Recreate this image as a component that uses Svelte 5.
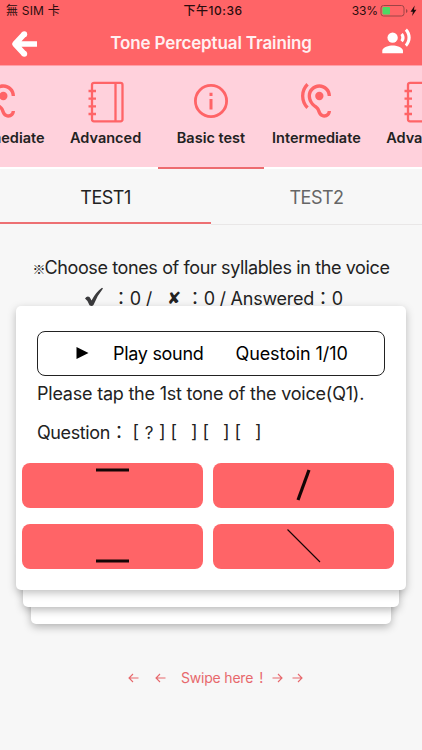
<script lang="ts">
	type Category = { label: string; icon: 'ear' | 'book' | 'info' };

	const categories: Category[] = [
		{ label: 'Intermediate', icon: 'ear' },
		{ label: 'Advanced', icon: 'book' },
		{ label: 'Basic test', icon: 'info' },
		{ label: 'Intermediate', icon: 'ear' },
		{ label: 'Advanced', icon: 'book' }
	];
	const tests = ['TEST1', 'TEST2'];

	// one stroke per tone, drawn in a 181x45 button
	const tones = [
		{ name: 'high', x1: 74, y1: 7, x2: 107, y2: 7, width: 3 },
		{ name: 'rising', x1: 85, y1: 37, x2: 96, y2: 7, width: 3.2 },
		{ name: 'low', x1: 74, y1: 37, x2: 107, y2: 37, width: 3 },
		{ name: 'falling', x1: 74.5, y1: 5.5, x2: 107, y2: 38, width: 1.1 }
	];

	let category = $state(2);
	let test = $state(0);
</script>

<div class="app">
	<header>
		<div class="status">
			<span class="carrier">無 SIM 卡</span>
			<span class="time">下午10:36</span>
			<span class="power">
				<span class="percent">33%</span>
				<svg width="38" height="14" viewBox="0 0 38 14">
					<rect x="1" y="1.5" width="23" height="10.5" rx="2.5" fill="none" stroke="#9c4446" />
					<rect x="2.5" y="3" width="7.5" height="7.5" rx="1" fill="#4cd964" />
					<path d="M26 5v4q1.500-.7 1.500-2t-1.500-2z" fill="#9c4446" />
					<path d="M34.700 1.500 30.500 7.800h2.400l-.8 4.200 4.300-6.300h-2.500z" fill="#200c0d" />
				</svg>
			</span>
		</div>
		<div class="bar">
			<button class="back" aria-label="Back">
				<svg width="28" height="30" viewBox="0 0 28 30">
					<path d="M14.300 5 5 15l9.300 10M6 15h21" fill="none" stroke="#fff" stroke-width="5.700" stroke-linejoin="round" />
					<circle cx="14.300" cy="5.200" r="2.900" fill="#fff" />
					<circle cx="14.300" cy="24.800" r="2.900" fill="#fff" />
				</svg>
			</button>
			<h1>Tone Perceptual Training</h1>
			<button class="voice" aria-label="Voice">
				<svg width="31" height="31" viewBox="0 0 24 24" fill="#fff">
					<circle cx="9" cy="9" r="4" />
					<path d="M9 15c-2.670 0-8 1.340-8 4v2h16v-2c0-2.660-5.330-4-8-4zM16.760 5.360l-1.680 1.690c.84 1.180.84 2.710 0 3.890l1.680 1.690c2.020-2.020 2.020-5.070 0-7.270zM20.070 2l-1.630 1.630c2.770 3.020 2.770 7.560 0 10.740L20.070 16c3.900-3.890 3.910-9.950 0-14z" />
				</svg>
			</button>
		</div>
	</header>

	<nav class="categories">
		{#each categories as item, i}
			<button class="category" class:active={i === category} onclick={() => (category = i)}>
				<svg width="40" height="42" viewBox="0 0 40 42">
					{#if item.icon === 'ear'}
						<g transform="scale(1.6667)" fill="#ff6467">
							<path d="M17 20c-.29 0-.56-.06-.76-.15-.71-.37-1.210-.88-1.710-2.380-.51-1.560-1.470-2.290-2.390-3-.79-.61-1.610-1.240-2.320-2.530C9.290 10.980 9 9.930 9 9c0-2.800 2.200-5 5-5s5 2.200 5 5h2c0-3.930-3.070-7-7-7S7 5.070 7 9c0 1.260.38 2.650 1.070 3.900.91 1.650 1.980 2.480 2.850 3.150.81.62 1.390 1.070 1.710 2.050.6 1.820 1.370 2.840 2.730 3.550.51.23 1.070.35 1.640.35 2.210 0 4-1.790 4-4h-2c0 1.100-.9 2-2 2zM7.640 2.640L6.220 1.220C4.230 3.210 3 5.960 3 9s1.230 5.790 3.220 7.780l1.410-1.410C6.010 13.740 5 11.490 5 9s1.010-4.740 2.640-6.360z" />
							<circle cx="14" cy="9" r="2.500" />
						</g>
					{:else if item.icon === 'book'}
						<g fill="none" stroke="#ff6467" stroke-width="2.300">
							<rect x="6" y="1.800" width="30.500" height="38.500" rx="2" />
							<path d="M29.500 2v38M2.500 10h7.500M2.500 17.700h7.500M2.500 25.400h7.500M2.500 33h7.500" />
						</g>
					{:else}
						<circle cx="20" cy="20" r="15.600" fill="none" stroke="#ff6467" stroke-width="2.800" />
						<path d="M20 18v10.500M20 11.800v3.200" stroke="#ff6467" stroke-width="3" />
					{/if}
				</svg>
				<span>{item.label}</span>
			</button>
		{/each}
	</nav>

	<nav class="tests">
		{#each tests as name, i}
			<button class="test" class:active={i === test} onclick={() => (test = i)}>{name}</button>
		{/each}
	</nav>

	<main>
		<p class="hint"><span class="mark">※</span>Choose tones of four syllables in the voice</p>
		<p class="score">
			<svg width="20" height="20" viewBox="0 0 20 20">
				<path d="M1 11.500q2-3 4.500-1.500 1.200 1.500 2 3.500Q12 5 18 .8l1 .6Q13 8.500 9.500 18q-1.500 1.600-4 .3Q4.500 14 1 11.500z" fill="#3b3b3d" />
			</svg>
			<span class="ok">：0 /</span>
			<span class="cross">✘</span>
			<span class="ng">：0 / Answered：0</span>
		</p>

		<div class="stack">
			<section class="card">
				<button class="play">
					<svg width="13" height="14" viewBox="0 0 13 14"><path d="M.5 1v12L12.500 7z" /></svg>
					<span class="play-label">Play sound</span>
					<span class="count">Questoin 1/10</span>
				</button>
				<p class="order">Please tap the 1st tone of the voice(Q1).</p>
				<p class="question">
					<span class="label">Question：</span><span class="slot">[<i>?</i>]</span><span class="slot">[<i></i>]</span><span class="slot">[<i></i>]</span><span class="slot">[<i></i>]</span>
				</p>
				<div class="tones">
					{#each tones as tone}
						<button class="tone" aria-label={tone.name}>
							<svg width="181" height="45" viewBox="0 0 181 45">
								<line x1={tone.x1} y1={tone.y1} x2={tone.x2} y2={tone.y2} stroke="#140505" stroke-width={tone.width} />
							</svg>
						</button>
					{/each}
				</div>
			</section>
			<div class="under first"></div>
			<div class="under second"></div>
		</div>

		<p class="swipe">
			<svg width="11" height="10" viewBox="0 0 11 10"><path d="M5 1 1 5l4 4M1 5h9.500" /></svg>
			<svg width="11" height="10" viewBox="0 0 11 10"><path d="M5 1 1 5l4 4M1 5h9.500" /></svg>
			<span>Swipe here<b>!</b></span>
			<svg width="11" height="10" viewBox="0 0 11 10"><path d="M6 1l4 4-4 4M10 5H.5" /></svg>
			<svg width="11" height="10" viewBox="0 0 11 10"><path d="M6 1l4 4-4 4M10 5H.5" /></svg>
		</p>
	</main>
</div>

<style>
	:global(body) { margin: 0; background: #f7f7f7; }

	.app {
		width: 422px; height: 750px; overflow: hidden;
		display: flex; flex-direction: column;
		background: #f7f7f7; color: #222;
		font-family: Inter, 'Noto Sans CJK TC', sans-serif;
	}
	button { border: 0; padding: 0; background: none; font-family: inherit; color: inherit; cursor: pointer; }
	p, h1 { margin: 0; font-weight: 400; }
	svg { display: block; flex: none; }

	header { height: 65px; flex: none; background: #ff6467; border-bottom: 1px solid #ff9fa7; }
	.status {
		display: grid; grid-template-columns: 1fr auto 1fr; align-items: center;
		height: 22px; padding: 0 4px 0 6px;
		font-size: 12px; line-height: 22px; color: #2a0d0e;
	}
	.carrier { letter-spacing: 0.2px; }
	.time { margin-left: 2px; font-weight: 500; letter-spacing: 0.5px; }
	.power { display: flex; justify-content: flex-end; align-items: center; gap: 2px; }
	.percent { letter-spacing: -0.1px; }
	.bar { display: flex; align-items: center; justify-content: space-between; height: 43px; padding: 0 10px 0 10px; }
	h1 { margin: -2px 0 0 3px; font-size: 17px; font-weight: 600; color: #fff0f1; letter-spacing: -0.13px; line-height: 42px; }
	.voice { margin-top: -5px; }

	.categories {
		display: flex; justify-content: center; flex: none;
		height: 103px; background: linear-gradient(#ffd1dc 101px, #fff 101px);
	}
	.category {
		display: flex; flex-direction: column; align-items: center;
		flex: 0 0 105.4px; box-sizing: border-box; padding-top: 15px;
		border-bottom: 2px solid transparent;
		font-size: 14.5px; font-weight: 600; line-height: 18px; letter-spacing: 0; white-space: nowrap;
	}
	.category span { margin-top: 6px; }
	.category.active { border-color: #ed6c70; }

	.tests { display: flex; flex: none; height: 56px; }
	.test {
		flex: 1; box-sizing: border-box; height: 56px; padding-top: 1px;
		border-bottom: 1px solid #e9e7e7; font-size: 18px; letter-spacing: -0.5px; color: #666;
	}
	.test.active { height: 55px; padding-top: 3px; border-bottom: 2px solid #ed7073; color: #222; }

	main { display: flex; flex-direction: column; padding: 27px 15px 0; }
	.hint { height: 32px; text-align: center; font-size: 18px; line-height: 32px; letter-spacing: -0.38px; white-space: nowrap; }
	.mark { font-family: 'Noto Sans CJK TC', sans-serif; font-size: 13px; font-weight: 700; line-height: 1; letter-spacing: -1px; }
	.score {
		display: flex; align-items: center; height: 30px; margin-top: -2px; padding-left: 69px;
		font-size: 18px; letter-spacing: -0.25px; white-space: pre;
	}
	.score svg { margin-top: -1px; }
	.ok { margin-left: 8px; }
	.cross { margin: 2px 0 0 15px; font-family: 'DejaVu Sans', sans-serif; font-size: 17px; }
	.ng { margin-left: 5px; }

	.stack { position: relative; margin-top: -6.5px; padding-bottom: 34px; }
	.card {
		position: relative; z-index: 2; box-sizing: border-box;
		height: 284px; padding: 25px 6px 0; margin: 0 0 0 1px; width: 390px;
		background: #fff; border-radius: 5px; box-shadow: 0 3px 9px rgba(0, 0, 0, 0.25);
	}
	.under {
		position: absolute; height: 60px; background: #fff;
		border-radius: 5px; box-shadow: 0 3px 8px rgba(0, 0, 0, 0.28);
	}
	.first { left: 8px; right: 8px; bottom: 17px; z-index: 1; }
	.second { left: 16px; right: 16px; bottom: 0; }

	.play {
		display: flex; align-items: center; box-sizing: border-box;
		width: 348px; height: 45px; margin-left: 15px; padding-left: 38px;
		border: 1px solid #222; border-radius: 8px;
		font-size: 18px; color: #000; white-space: nowrap;
	}
	.play-label { margin-left: 24px; letter-spacing: -0.3px; }
	.count { margin-left: 32px; letter-spacing: -0.1px; }
	.order { margin: 6px 0 0 15px; font-size: 18px; line-height: 24px; letter-spacing: -0.22px; white-space: nowrap; }
	.question { display: flex; gap: 5px; margin: 14px 0 0 15px; font-size: 18px; line-height: 26px; }
	.label { width: 90.500px; letter-spacing: -0.4px; white-space: nowrap; }
	.slot { display: flex; justify-content: space-between; width: 27px; line-height: 24px; }
	.slot:nth-child(2) { width: 33px; }
	.slot i { font-style: normal; font-size: 17px; line-height: 26px; }
	.tones { display: grid; grid-template-columns: 181px 181px; gap: 16px 10px; margin-top: 17px; }
	.tone { height: 45px; background: #ff6467; border-radius: 8px; }

	.swipe {
		display: flex; align-items: center; margin: 44.5px 0 0 113px;
		font-size: 14px; line-height: 20px; color: #e7686c;
	}
	.swipe svg { fill: none; stroke: #e7686c; stroke-width: 1.1; }
	.swipe svg:nth-of-type(2) { margin-left: 16px; }
	.swipe span { margin: 0 9px 0 15px; letter-spacing: -0.2px; }
	.swipe b { font-weight: 400; margin-left: 6px; }
	.swipe svg:last-child { margin-left: 9px; }
</style>
